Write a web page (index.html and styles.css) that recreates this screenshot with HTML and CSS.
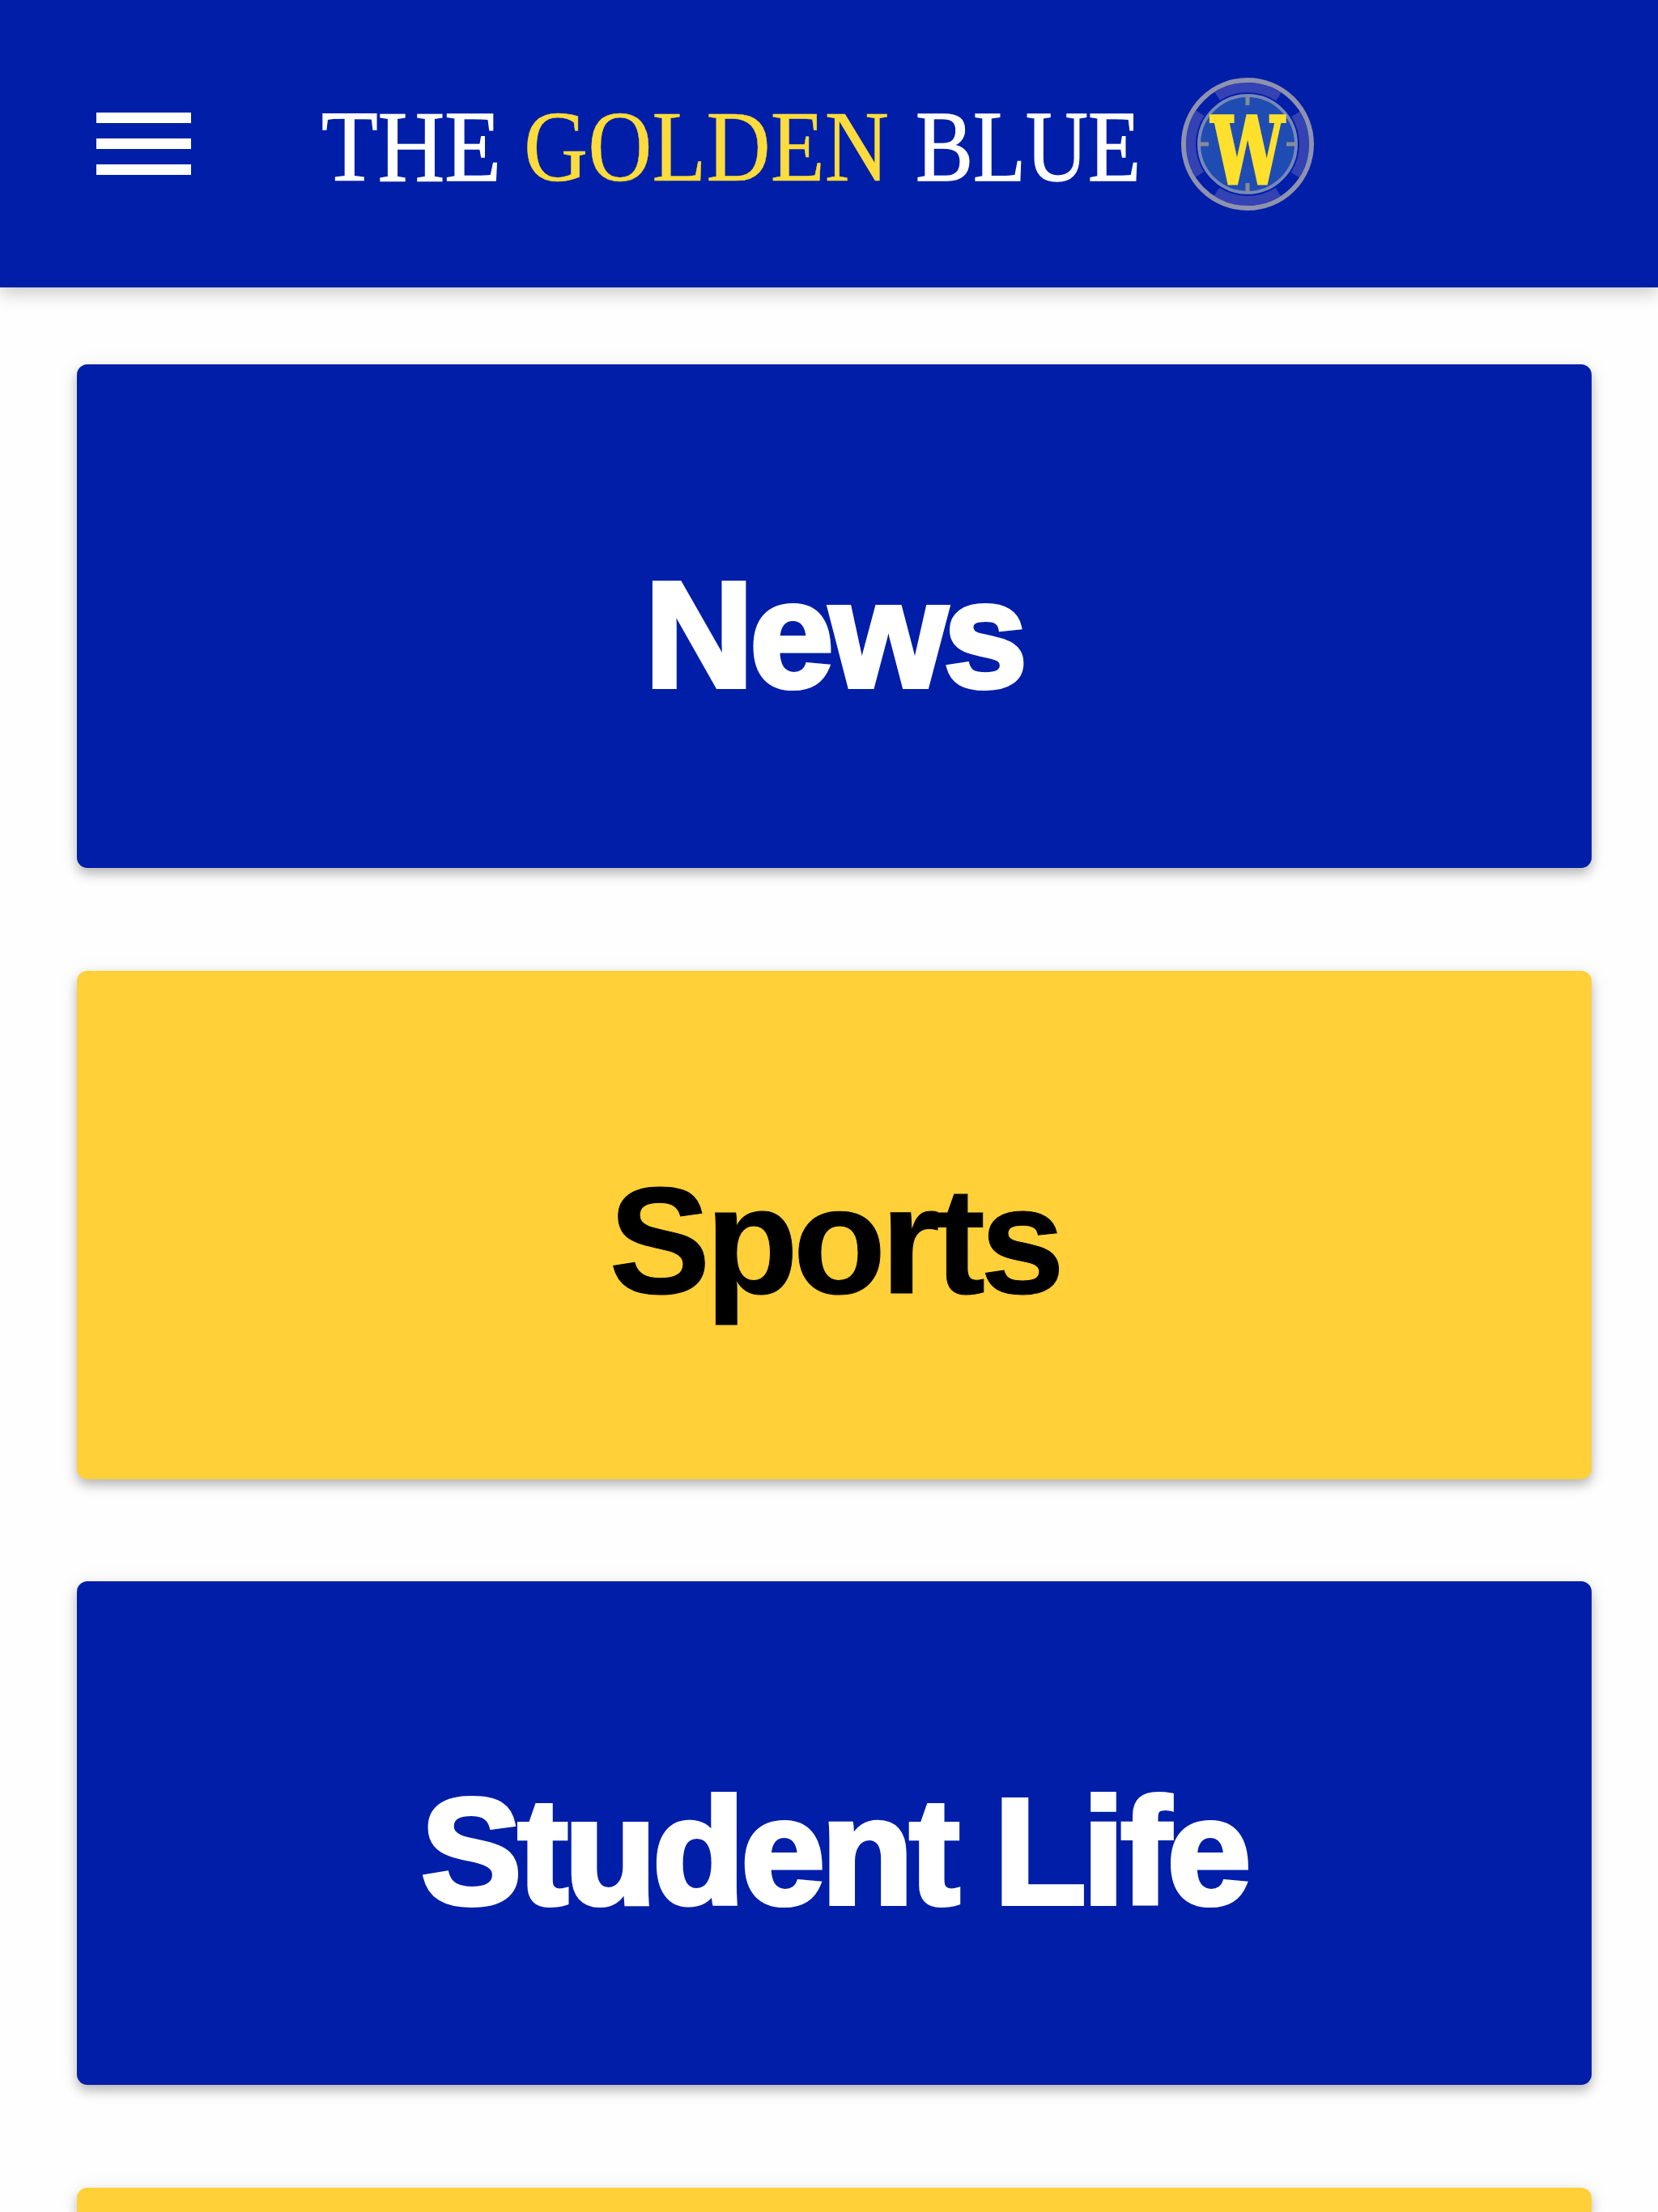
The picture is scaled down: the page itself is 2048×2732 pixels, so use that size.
FILE: index.html
```html
<!DOCTYPE html>
<html lang="en">

<head>
  <meta charset="UTF-8">
  <title>The Golden Blue</title>
  <link rel="stylesheet" href="styles.css">
</head>

<body>
  <header class="navbar">
    <button class="menu-btn" aria-label="Menu">
      <span class="bar"></span>
      <span class="bar"></span>
      <span class="bar"></span>
    </button>

    <svg class="logo" viewBox="0 0 1030 180" role="img" aria-label="The Golden Blue">
      <g class="wordmark">
        <text transform="translate(7 135) scale(0.906 1)">THE</text>
        <text class="gold" transform="translate(257 135) scale(0.871 1)">GOLDEN</text>
        <text transform="translate(741 135) scale(0.845 1)">BLUE</text>
      </g>
    </svg>

    <!-- Seal -->
    <svg class="seal" viewBox="0 0 170 170" role="img" aria-label="W">
      <circle class="seal-fill" cx="85" cy="85" r="61" />
      <circle class="seal-band" cx="85" cy="85" r="70" />
      <circle class="seal-ring" cx="85" cy="85" r="79" />
      <circle class="seal-inner" cx="85" cy="85" r="60" />
      <path class="seal-ticks" d="M85 25v12M85 133v12M25 85h12M133 85h12" />
      <text class="seal-letter" transform="translate(40 134) scale(0.7 1)">W</text>
    </svg>
  </header>

  <main class="cards">
    <a class="card blue">News</a>
    <a class="card yellow">Sports</a>
    <a class="card blue">Student Life</a>
    <a class="card yellow"></a>
  </main>
</body>

</html>
```
FILE: styles.css
```css
* {
  box-sizing: border-box;
}

html {
  height: 100%;
  overflow: hidden;
}

body {
  margin: 0;
  height: 100%;
  overflow: hidden;
  background-color: #fefefe;
  font-family: "Liberation Sans", Arial, sans-serif;
}

/* --- Navbar --- */
.navbar {
  display: flex;
  align-items: center;
  height: 355px;
  padding-left: 119px;
  background-color: #001ea8;
  box-shadow: 0 8px 20px rgba(0, 0, 0, 0.2);
}

.menu-btn {
  display: flex;
  flex-direction: column;
  gap: 19px;
  width: 117px;
  padding: 0;
  border: none;
  background: none;
}

.bar {
  height: 13px;
  background-color: #fff;
}

.logo {
  width: 1030px;
  height: 180px;
  margin-left: 154px;
}

.wordmark {
  fill: #fff;
  stroke: #fff;
  stroke-width: 1.5;
  font-family: "Liberation Serif", "Times New Roman", serif;
  font-size: 126px;
}

.gold {
  fill: #fbdc3c;
  stroke: #fbdc3c;
  stroke-width: 0.5;
}

.seal {
  width: 170px;
  height: 170px;
  margin-left: 36px;
}

.seal-fill {
  fill: #1f4cb2;
}

.seal-band {
  fill: none;
  stroke: #3542b4;
  stroke-width: 12;
  stroke-dasharray: 80 30;
  stroke-dashoffset: 40;
}

.seal-ring {
  fill: none;
  stroke: #8f92ae;
  stroke-width: 6;
}

.seal-inner {
  fill: none;
  stroke: #7788b8;
  stroke-width: 4;
}

.seal-ticks {
  stroke: #878b98;
  stroke-width: 5;
}

.seal-letter {
  fill: #ffe02c;
  stroke: #ffe02c;
  stroke-width: 4;
  font-family: "DejaVu Serif", serif;
  font-size: 115px;
  font-weight: bold;
}

/* --- Category cards --- */
.cards {
  display: flex;
  flex-direction: column;
  gap: 126.5px;
  height: calc(100% - 355px);
  padding: 95px 82px 0 95px;
  overflow: hidden;
}

.card {
  display: flex;
  flex-shrink: 0;
  align-items: center;
  justify-content: center;
  height: 622px;
  padding-top: 46px;
  border-radius: 13px;
  font-size: 186px;
  font-weight: bold;
  line-height: 1;
  box-shadow: 0 7px 14px rgba(0, 0, 0, 0.26), 0 2px 30px rgba(0, 0, 0, 0.06);
}

.blue {
  background-color: #001ea8;
  color: #fff;
  letter-spacing: -4.5px;
  -webkit-text-stroke: 6px #fff;
}

.yellow {
  height: 628px;
  padding-top: 38px;
  background-color: #ffd038;
  color: #000;
  font-size: 188px;
  letter-spacing: -6.5px;
  -webkit-text-stroke: 1px #000;
}

.yellow:last-child {
  flex: 1;
  height: auto;
  min-height: 0;
  padding: 0;
  border-radius: 13px 13px 0 0;
}
```
